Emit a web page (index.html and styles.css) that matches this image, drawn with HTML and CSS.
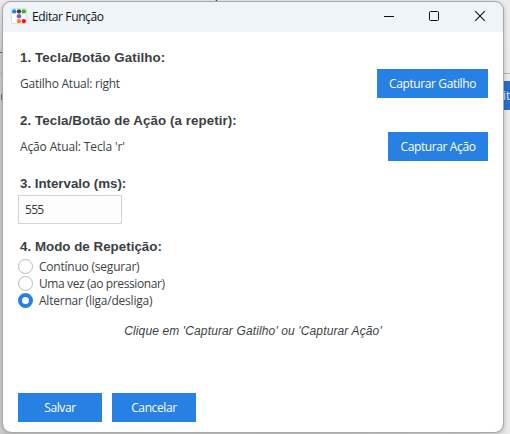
FILE: index.html
```html
<!DOCTYPE html>
<html lang="pt-BR">
<head>
<meta charset="utf-8">
<title>Editar Função</title>
<link rel="stylesheet" href="styles.css">
</head>
<body>
<div class="backdrop">
  <span class="peek-glyph">ç</span>
  <span class="peek-line"></span>
  <span class="peek-dash"></span>
  <span class="peek-mark"></span>
  <span class="peek-button">it</span>
</div>
<main class="window">
  <header class="titlebar">
    <svg class="app-icon" width="16" height="16" viewBox="0 0 16 16">
      <rect x=".5" y=".5" width="15" height="15" rx="1" fill="#fff" stroke="#dcdcdc"/>
      <circle cx="3.2" cy="3.4" r="2.2" fill="#2484ea"/>
      <circle cx="8" cy="3.4" r="2.2" fill="#3c4350"/>
      <circle cx="12.8" cy="3.4" r="2.2" fill="#35b512"/>
      <circle cx="8" cy="8.2" r="2.2" fill="#9b50c0"/>
      <circle cx="8" cy="13.1" r="2.2" fill="#ff7a1c"/>
      <circle cx="12.8" cy="13.1" r="2.2" fill="#ff0a3c"/>
    </svg>
    <h1 class="title">Editar Função</h1>
    <svg class="controls" width="104" height="12" viewBox="0 0 104 12" fill="none" stroke="#111">
      <path d="M0 6.5h10"/>
      <rect x="45.5" y="1.5" width="9" height="9" rx="1"/>
      <path d="M91.2 1.2l9.6 9.6M100.8 1.2l-9.6 9.6" stroke-width="1.1"/>
    </svg>
  </header>
  <form class="form">
    <section class="section">
      <h2 class="heading">1. Tecla/Botão Gatilho:</h2>
      <div class="row"><span class="label current-trigger">Gatilho Atual: right</span><button type="button" class="button trigger">Capturar Gatilho</button></div>
    </section>
    <section class="section">
      <h2 class="heading">2. Tecla/Botão de Ação (a repetir):</h2>
      <div class="row"><span class="label">Ação Atual: Tecla 'r'</span><button type="button" class="button action">Capturar Ação</button></div>
    </section>
    <section class="section">
      <h2 class="heading interval-heading">3. Intervalo (ms):</h2>
      <input class="input" type="text" value="555">
    </section>
    <section class="section modes">
      <h2 class="heading mode-heading">4. Modo de Repetição:</h2>
      <label class="option"><input class="radio" type="radio" name="mode"><span>Contínuo (segurar)</span></label>
      <label class="option once"><input class="radio" type="radio" name="mode"><span>Uma vez (ao pressionar)</span></label>
      <label class="option"><input class="radio" type="radio" name="mode" checked><span>Alternar (liga/desliga)</span></label>
    </section>
    <p class="hint">Clique em 'Capturar Gatilho' ou 'Capturar Ação'</p>
    <footer class="footer"><button type="button" class="button">Salvar</button><button type="button" class="button">Cancelar</button></footer>
  </form>
</main>
</body>
</html>
```
FILE: styles.css
```css
* { box-sizing: border-box; }
body {
  margin: 0;
  width: 510px;
  height: 434px;
  overflow: hidden;
  position: relative;
  padding: 2px 0 0 3px;
  background: linear-gradient(90deg, #cdcdcd 0 250px, #e4e4e4 504px, #ededed 510px);
  color: #3b3f44;
  font: 12px/16px "Open Sans", "Noto Sans", sans-serif;
}
.backdrop { position: absolute; inset: 0; overflow: hidden; background: linear-gradient(#ececec 0, rgba(236,236,236,0) 60px); }
.backdrop span { position: absolute; }
.peek-glyph { left: 212px; top: -13px; color: #222; font: bold 13px/16px "Liberation Sans", sans-serif; }
.peek-line { left: 0; top: 73px; width: 510px; height: 1px; background: #b5b5b5; }
.peek-dash { left: 0; top: 52px; width: 2px; height: 1px; background: #665; }
.peek-mark { left: 1px; top: 94px; width: 1px; height: 6px; background: #966; }
.backdrop .peek-button { left: 490px; top: 81px; width: 30px; height: 29px; padding-left: 13px; background: #2470c8; color: #dce9f8; line-height: 29px; }
.window {
  position: relative;
  width: 500px;
  height: 430px;
  background: #fff;
  border-radius: 8px;
  overflow: hidden;
  outline: 1px solid #a9a9a9;
  box-shadow: 0 1px 4px 1px rgba(0,0,0,.2);
}
.titlebar { display: flex; align-items: center; height: 30px; padding: 0 15px 0 8px; background: #eef4f7; }
.app-icon { margin-top: -2px; }
.title { margin: 0 auto 0 5px; color: #111; font-size: 12px; font-weight: 400; letter-spacing: -.38px; line-height: 16px; }
.controls { margin-top: -2px; }
.form { padding: 15px 15px 0; }
.section { height: 63px; }
.heading { margin: 0; padding: 2px; height: 22px; font: bold 13.33px/17px "Liberation Sans", Arial, sans-serif; letter-spacing: .08px; }
.interval-heading { letter-spacing: -.02px; }
.mode-heading { letter-spacing: .02px; }
.row { display: flex; justify-content: space-between; padding-left: 2px; }
.label { line-height: 29px; letter-spacing: -.14px; }
.current-trigger { letter-spacing: -.24px; }
.button {
  width: 84px;
  height: 29px;
  padding: 0;
  border: 0;
  background: #2780e3;
  color: #fff;
  font: 12px/29px "Open Sans", "Noto Sans", sans-serif;
  letter-spacing: -.38px;
}
.trigger { width: 111px; }
.action { width: 100px; }
.input {
  display: block;
  width: 104px;
  height: 29px;
  padding: 0 6px;
  border: 1px solid #ced4da;
  border-radius: 1px;
  background: #fdfdfd;
  color: #343a40;
  font: 12px/27px "Open Sans", "Noto Sans", sans-serif;
  letter-spacing: -.7px;
}
.modes { height: 86px; }
.option { display: flex; align-items: center; gap: 6px; height: 17px; letter-spacing: -.22px; }
.once { letter-spacing: -.4px; }
.radio { appearance: none; width: 15px; height: 15px; margin: 0; border: 1px solid #b5babf; border-radius: 50%; background: #fff; }
.radio:checked { border: 4.5px solid #2780e3; }
.hint { margin: 0; height: 71px; text-align: center; font: italic 12px/19px "Liberation Sans", Arial, sans-serif; letter-spacing: .13px; }
.footer { display: flex; gap: 10px; }
```
